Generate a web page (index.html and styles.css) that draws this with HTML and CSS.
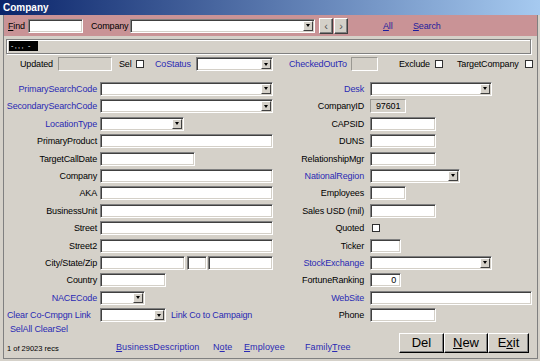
FILE: index.html
```html
<!DOCTYPE html>
<html>
<head>
<meta charset="utf-8">
<title>Company</title>
<link rel="stylesheet" href="styles.css">
</head>
<body>
<div class="win">
  <div class="title">Company</div>
  <div class="client">
    <div class="hdr">
      <span class="find"><u>F</u>ind</span>
      <span class="inp w55"></span>
      <span class="comp">Company</span>
      <span class="combo w185"><span class="arr"></span></span>
      <span class="nav nav1">&lsaquo;</span><span class="nav nav2">&rsaquo;</span>
      <span class="hlink all"><u>A</u>ll</span>
      <span class="hlink"><u>S</u>earch</span>
    </div>
    <div class="tabs"><div class="frame"><div class="blk">-,,, -</div></div></div>
    <div class="toprow">
      <span class="t-upd">Updated</span>
      <span class="dis w54"></span>
      <span class="t-sel">Sel</span>
      <span class="cb"></span>
      <span class="t-cos lk">CoStatus</span>
      <span class="combo w77"><span class="arr"></span></span>
      <span class="t-chk lk">CheckedOutTo</span>
      <span class="dis w27"></span>
      <span class="t-exc">Exclude</span>
      <span class="cb"></span>
      <span class="t-tc">TargetCompany</span>
      <span class="cb"></span>
    </div>
    <div class="grid">
      <span class="lbl lk">PrimarySearchCode</span>
      <div class="fld"><span class="combo w173"><span class="arr"></span></span></div>
      <span class="lbl r lk">Desk</span>
      <div class="fld"><span class="combo w122"><span class="arr"></span></span></div>

      <span class="lbl lk">SecondarySearchCode</span>
      <div class="fld"><span class="combo w173"><span class="arr"></span></span></div>
      <span class="lbl r">CompanyID</span>
      <div class="fld"><span class="dis w36 cid">97601</span></div>

      <span class="lbl lk">LocationType</span>
      <div class="fld"><span class="combo w84"><span class="arr"></span></span></div>
      <span class="lbl r">CAPSID</span>
      <div class="fld"><span class="inp w66"></span></div>

      <span class="lbl">PrimaryProduct</span>
      <div class="fld"><span class="inp w173"></span></div>
      <span class="lbl r">DUNS</span>
      <div class="fld"><span class="inp w66"></span></div>

      <span class="lbl">TargetCallDate</span>
      <div class="fld"><span class="inp w95"></span></div>
      <span class="lbl r">RelationshipMgr</span>
      <div class="fld"><span class="inp w66"></span></div>

      <span class="lbl">Company</span>
      <div class="fld"><span class="inp w173"></span></div>
      <span class="lbl r lk">NationalRegion</span>
      <div class="fld"><span class="combo w90"><span class="arr"></span></span></div>

      <span class="lbl">AKA</span>
      <div class="fld"><span class="inp w173"></span></div>
      <span class="lbl r">Employees</span>
      <div class="fld"><span class="inp w36"></span></div>

      <span class="lbl">BusinessUnit</span>
      <div class="fld"><span class="inp w173"></span></div>
      <span class="lbl r">Sales USD (mil)</span>
      <div class="fld"><span class="inp w66"></span></div>

      <span class="lbl">Street</span>
      <div class="fld"><span class="inp w173"></span></div>
      <span class="lbl r">Quoted</span>
      <div class="fld"><span class="cb quoted"></span></div>

      <span class="lbl">Street2</span>
      <div class="fld"><span class="inp w173"></span></div>
      <span class="lbl r">Ticker</span>
      <div class="fld"><span class="inp w31"></span></div>

      <span class="lbl">City/State/Zip</span>
      <div class="fld"><span class="inp w85"></span><span class="inp w20 st"></span><span class="inp w65 zip"></span></div>
      <span class="lbl r lk">StockExchange</span>
      <div class="fld"><span class="combo w122"><span class="arr"></span></span></div>

      <span class="lbl">Country</span>
      <div class="fld"><span class="inp w66"></span></div>
      <span class="lbl r">FortuneRanking</span>
      <div class="fld"><span class="inp w31 num">0</span></div>

      <span class="lbl lk">NACECode</span>
      <div class="fld"><span class="combo w45"><span class="arr"></span></span></div>
      <span class="lbl r lk">WebSite</span>
      <div class="fld"><span class="inp w162"></span></div>

      <span class="lbl left lk">Clear Co-Cmpgn Link</span>
      <div class="fld"><span class="combo w66"><span class="arr"></span></span><span class="lk linkco">Link Co to Campaign</span></div>
      <span class="lbl r">Phone</span>
      <div class="fld"><span class="inp w66"></span></div>
    </div>
    <div class="foot">
      <div class="fl">
        <div class="selrow lk">SelAll ClearSel</div>
        <div class="lrow">
          <span class="recs">1 of 29023 recs</span>
          <span class="lk bl b1"><u>B</u>usinessDescription</span>
          <span class="lk bl b2">N<u>o</u>te</span>
          <span class="lk bl b3"><u>E</u>mployee</span>
          <span class="lk bl"><span>Family</span><u>T</u>ree</span>
        </div>
      </div>
      <div class="btns">
        <span class="btn bdel">Del</span>
        <span class="btn bnew"><u>N</u>ew</span>
        <span class="btn bexit">E<u>x</u>it</span>
      </div>
    </div>
  </div>
</div>
</body>
</html>
```
FILE: styles.css
```css
* { box-sizing: border-box; margin: 0; padding: 0; }
html, body { width: 540px; height: 361px; overflow: hidden; background: #d4d0c8; }
body {
  font-family: "Liberation Sans", Arial, sans-serif;
  font-size: 9px;
  letter-spacing: -0.15px;
  color: #000;
}
.win { width: 540px; height: 361px; display: flex; flex-direction: column; background: #d5d1c9; }
.title {
  height: 15px; line-height: 15px; padding-left: 3px;
  color: #fff; font-weight: bold; font-size: 10px; letter-spacing: 0;
  background: linear-gradient(to right, #0a246a, #a6caf0);
}
.client {
  flex: 1; margin: 0 2px 2px 3px;
  border: 1px solid #808080; border-top: none;
  display: flex; flex-direction: column;
}
.hdr { height: 21px; background: #c99396; display: flex; align-items: center; padding-left: 4px; }
.find { width: 20px; }
.comp { width: 39px; }
.inp, .combo {
  display: block; height: 14px; background: #fff;
  border: 1px solid; border-color: #808080 #fff #fff #808080;
  box-shadow: inset 1px 1px #404040, inset -1px -1px #d4d0c8;
}
.combo { display: flex; justify-content: flex-end; padding: 1px; }
.arr {
  width: 10px; height: 100%; background: #d4d0c8;
  border: 1px solid; border-color: #fff #404040 #404040 #fff;
  display: flex; align-items: center; justify-content: center;
}
.arr::after { content: ""; border-left: 2px solid transparent; border-right: 2px solid transparent; border-top: 3px solid #000; }
.dis {
  display: block; height: 14px; background: #d4d0c8;
  border: 1px solid; border-color: #9a9892 #fff #fff #9a9892;
}
.cb { display: block; width: 8px; height: 8px; background: #fff; border: 1px solid #303030; }
.nav {
  width: 14px; height: 16px; background: #d4d0c8;
  border: 1px solid; border-color: #fff #404040 #404040 #fff;
  box-shadow: inset -1px -1px #808080;
  font-size: 11px; color: #555; line-height: 12px;
  display: flex; align-items: center; justify-content: center;
}
.nav1 { margin-left: 4px; }
.nav2 { margin-left: 1px; }
.hlink { color: #1d1d9c; }
.all { margin-left: 35px; width: 30px; }
.w20 { width: 20px; } .w27 { width: 27px; } .w31 { width: 31px; } .w36 { width: 36px; }
.w45 { width: 45px; } .w54 { width: 54px; } .w55 { width: 55px; margin-right: 8px; }
.w65 { width: 65px; } .w66 { width: 66px; } .w77 { width: 77px; } .w84 { width: 84px; }
.w85 { width: 85px; } .w90 { width: 90px; } .w95 { width: 95px; } .w122 { width: 122px; }
.w162 { width: 162px; } .w173 { width: 173px; } .w185 { width: 185px; }

.tabs { height: 21px; padding: 3px 0 0 2px; }
.frame {
  width: 525px; height: 15px; border: 1px solid #808080;
  box-shadow: 1px 1px 0 #fff, inset 1px 1px 0 #fff;
  padding: 1px 0 0 2px;
}
.blk {
  width: 29px; height: 10px; background: #000; color: #fff;
  font-size: 7px; line-height: 9px; padding-left: 2px; letter-spacing: 1.4px;
}
.toprow { height: 14px; display: flex; align-items: center; white-space: nowrap; }
.t-upd { margin-left: 16px; width: 38px; }
.t-sel { margin-left: 7px; width: 17px; }
.t-cos { margin-left: 11px; width: 41px; }
.t-chk { margin-left: 16px; width: 62px; }
.t-exc { margin-left: 21px; width: 36px; }
.t-tc { margin-left: 14px; width: 68px; }
.lk { color: #2a2ab4; }

.grid {
  margin-top: 9.3px; display: grid;
  grid-template-columns: 96px 173px 97px 163px;
  grid-auto-rows: 17.4px; align-items: center;
}
.lbl { text-align: right; padding-right: 3px; white-space: nowrap; }
.lbl.r { padding-right: 6px; }
.lbl.left { text-align: left; padding-left: 3px; padding-right: 0; }
.fld { display: flex; align-items: center; }
.cid { padding-left: 5px; line-height: 12px; }
.num { text-align: right; padding-right: 4px; line-height: 12px; }
.st { margin-left: 2px; }
.zip { margin-left: 1px; }
.quoted { margin-left: 2px; }
.linkco { margin-left: 5px; white-space: nowrap; }

.foot { flex: 1; display: flex; }
.fl { width: 395px; }
.selrow { padding-left: 6px; height: 10px; line-height: 10px; }
.lrow { display: flex; margin-top: 3px; height: 20px; align-items: center; white-space: nowrap; }
.recs { width: 112px; padding-left: 3px; font-size: 7.5px; letter-spacing: 0; padding-top: 4px; }
.bl { letter-spacing: 0.1px; }
.b1 { width: 97px; } .b2 { width: 31px; } .b3 { width: 61px; }
.btns { display: flex; margin-top: 9px; height: 20px; }
.btn {
  height: 20px; font-size: 13px; letter-spacing: 0; color: #000;
  background: #d4d0c8; border: 1px solid; border-color: #fff #000 #000 #fff;
  box-shadow: inset -1px -1px #808080;
  display: flex; align-items: center; justify-content: center;
}
.bdel { width: 45px; } .bnew { width: 44px; } .bexit { width: 41px; }
```
